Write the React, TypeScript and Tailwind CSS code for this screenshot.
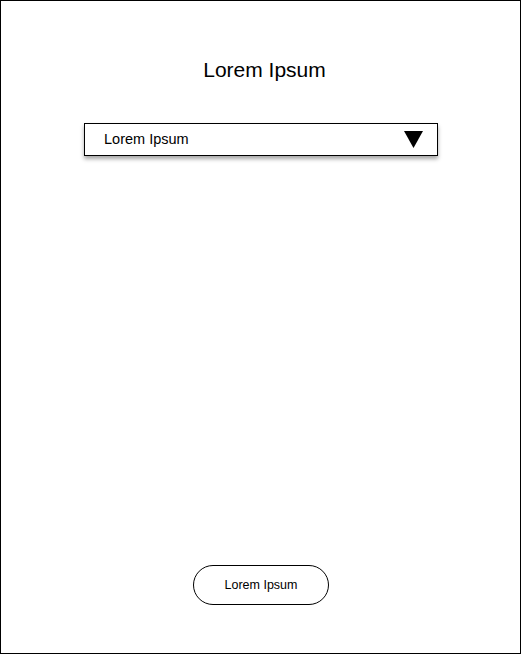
import React from 'react';

const App = () => {
  return (
    <div className="w-[521px] h-[654px] bg-white" style={{ fontFamily: '"Liberation Sans", Arial, sans-serif' }}>
      <div className="w-[521px] h-[654px] border border-black flex flex-col items-center text-black">
        {/* Title */}
        <h1 className="mt-[56px] ml-[8px] text-[21px] leading-[26px]">Lorem Ipsum</h1>

        {/* Dropdown */}
        <div className="mt-[40px] ml-[1px] w-[354px] h-[33px] border border-black bg-white shadow-[0_3px_4px_rgba(0,0,0,0.35)] flex items-center justify-between pl-[19px] pr-[14px]">
          <span className="text-[14.5px]">Lorem Ipsum</span>
          <svg width="19" height="17" viewBox="0 0 19 17">
            <polygon points="0,0 19,0 9.5,17" fill="black" />
          </svg>
        </div>

        <div className="flex-1" />

        {/* Button */}
        <button className="mb-[48px] ml-[1px] w-[136px] h-[40px] rounded-full border border-black bg-white text-[12.5px]">
          Lorem Ipsum
        </button>
      </div>
    </div>
  );
};

export default App;
